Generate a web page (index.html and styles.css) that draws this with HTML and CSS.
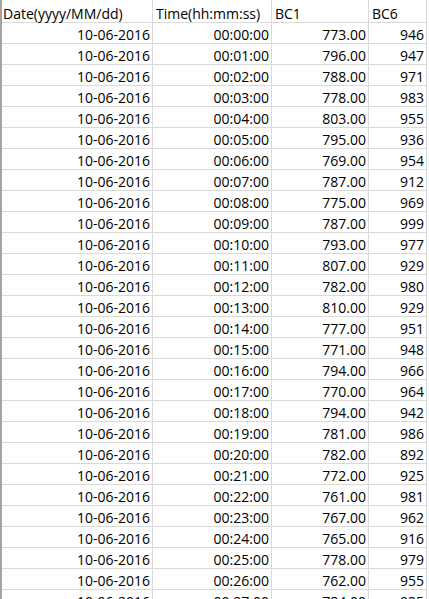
FILE: index.html
```html
<!DOCTYPE html>
<html>
<head>
<meta charset="utf-8">
<link rel="stylesheet" href="styles.css">
</head>
<body>
<div class="sheet">
  <div class="row head"><div class="c">Date(yyyy/MM/dd)</div><div class="c">Time(hh:mm:ss)</div><div class="c">BC1</div><div class="c">BC6</div></div>
  <div class="row"><div class="c">10-06-2016</div><div class="c">00:00:00</div><div class="c">773.00</div><div class="c">946</div></div>
  <div class="row"><div class="c">10-06-2016</div><div class="c">00:01:00</div><div class="c">796.00</div><div class="c">947</div></div>
  <div class="row"><div class="c">10-06-2016</div><div class="c">00:02:00</div><div class="c">788.00</div><div class="c">971</div></div>
  <div class="row"><div class="c">10-06-2016</div><div class="c">00:03:00</div><div class="c">778.00</div><div class="c">983</div></div>
  <div class="row"><div class="c">10-06-2016</div><div class="c">00:04:00</div><div class="c">803.00</div><div class="c">955</div></div>
  <div class="row"><div class="c">10-06-2016</div><div class="c">00:05:00</div><div class="c">795.00</div><div class="c">936</div></div>
  <div class="row"><div class="c">10-06-2016</div><div class="c">00:06:00</div><div class="c">769.00</div><div class="c">954</div></div>
  <div class="row"><div class="c">10-06-2016</div><div class="c">00:07:00</div><div class="c">787.00</div><div class="c">912</div></div>
  <div class="row"><div class="c">10-06-2016</div><div class="c">00:08:00</div><div class="c">775.00</div><div class="c">969</div></div>
  <div class="row"><div class="c">10-06-2016</div><div class="c">00:09:00</div><div class="c">787.00</div><div class="c">999</div></div>
  <div class="row"><div class="c">10-06-2016</div><div class="c">00:10:00</div><div class="c">793.00</div><div class="c">977</div></div>
  <div class="row"><div class="c">10-06-2016</div><div class="c">00:11:00</div><div class="c">807.00</div><div class="c">929</div></div>
  <div class="row"><div class="c">10-06-2016</div><div class="c">00:12:00</div><div class="c">782.00</div><div class="c">980</div></div>
  <div class="row"><div class="c">10-06-2016</div><div class="c">00:13:00</div><div class="c">810.00</div><div class="c">929</div></div>
  <div class="row"><div class="c">10-06-2016</div><div class="c">00:14:00</div><div class="c">777.00</div><div class="c">951</div></div>
  <div class="row"><div class="c">10-06-2016</div><div class="c">00:15:00</div><div class="c">771.00</div><div class="c">948</div></div>
  <div class="row"><div class="c">10-06-2016</div><div class="c">00:16:00</div><div class="c">794.00</div><div class="c">966</div></div>
  <div class="row"><div class="c">10-06-2016</div><div class="c">00:17:00</div><div class="c">770.00</div><div class="c">964</div></div>
  <div class="row"><div class="c">10-06-2016</div><div class="c">00:18:00</div><div class="c">794.00</div><div class="c">942</div></div>
  <div class="row"><div class="c">10-06-2016</div><div class="c">00:19:00</div><div class="c">781.00</div><div class="c">986</div></div>
  <div class="row"><div class="c">10-06-2016</div><div class="c">00:20:00</div><div class="c">782.00</div><div class="c">892</div></div>
  <div class="row"><div class="c">10-06-2016</div><div class="c">00:21:00</div><div class="c">772.00</div><div class="c">925</div></div>
  <div class="row"><div class="c">10-06-2016</div><div class="c">00:22:00</div><div class="c">761.00</div><div class="c">981</div></div>
  <div class="row"><div class="c">10-06-2016</div><div class="c">00:23:00</div><div class="c">767.00</div><div class="c">962</div></div>
  <div class="row"><div class="c">10-06-2016</div><div class="c">00:24:00</div><div class="c">765.00</div><div class="c">916</div></div>
  <div class="row"><div class="c">10-06-2016</div><div class="c">00:25:00</div><div class="c">778.00</div><div class="c">979</div></div>
  <div class="row"><div class="c">10-06-2016</div><div class="c">00:26:00</div><div class="c">762.00</div><div class="c">955</div></div>
  <div class="row"><div class="c">10-06-2016</div><div class="c">00:27:00</div><div class="c">784.00</div><div class="c">935</div></div>
</div>
</body>
</html>
```
FILE: styles.css
```css
html, body {
  margin: 0;
  padding: 0;
  background: #ffffff;
  overflow: hidden;
}
.sheet {
  width: 427px;
  border-left: 2px solid #a3a3a3;
  font-family: "Open Sans", "Liberation Sans", sans-serif;
  font-size: 14px;
  color: #000000;
}
.row {
  display: grid;
  grid-template-columns: 151px 119px 97px 58px;
  height: 21px;
}
.c {
  box-sizing: border-box;
  height: 21px;
  border-right: 1px solid #d9d9d9;
  border-bottom: 1px solid #d9d9d9;
  padding: 1px 2px 0 3px;
  line-height: 21px;
  text-align: right;
  white-space: nowrap;
}
.head {
  height: 23px;
}
.head .c {
  height: 23px;
  padding-top: 3px;
  line-height: 22px;
  text-align: left;
}
.head .c:first-child {
  padding-left: 1px;
}
```
